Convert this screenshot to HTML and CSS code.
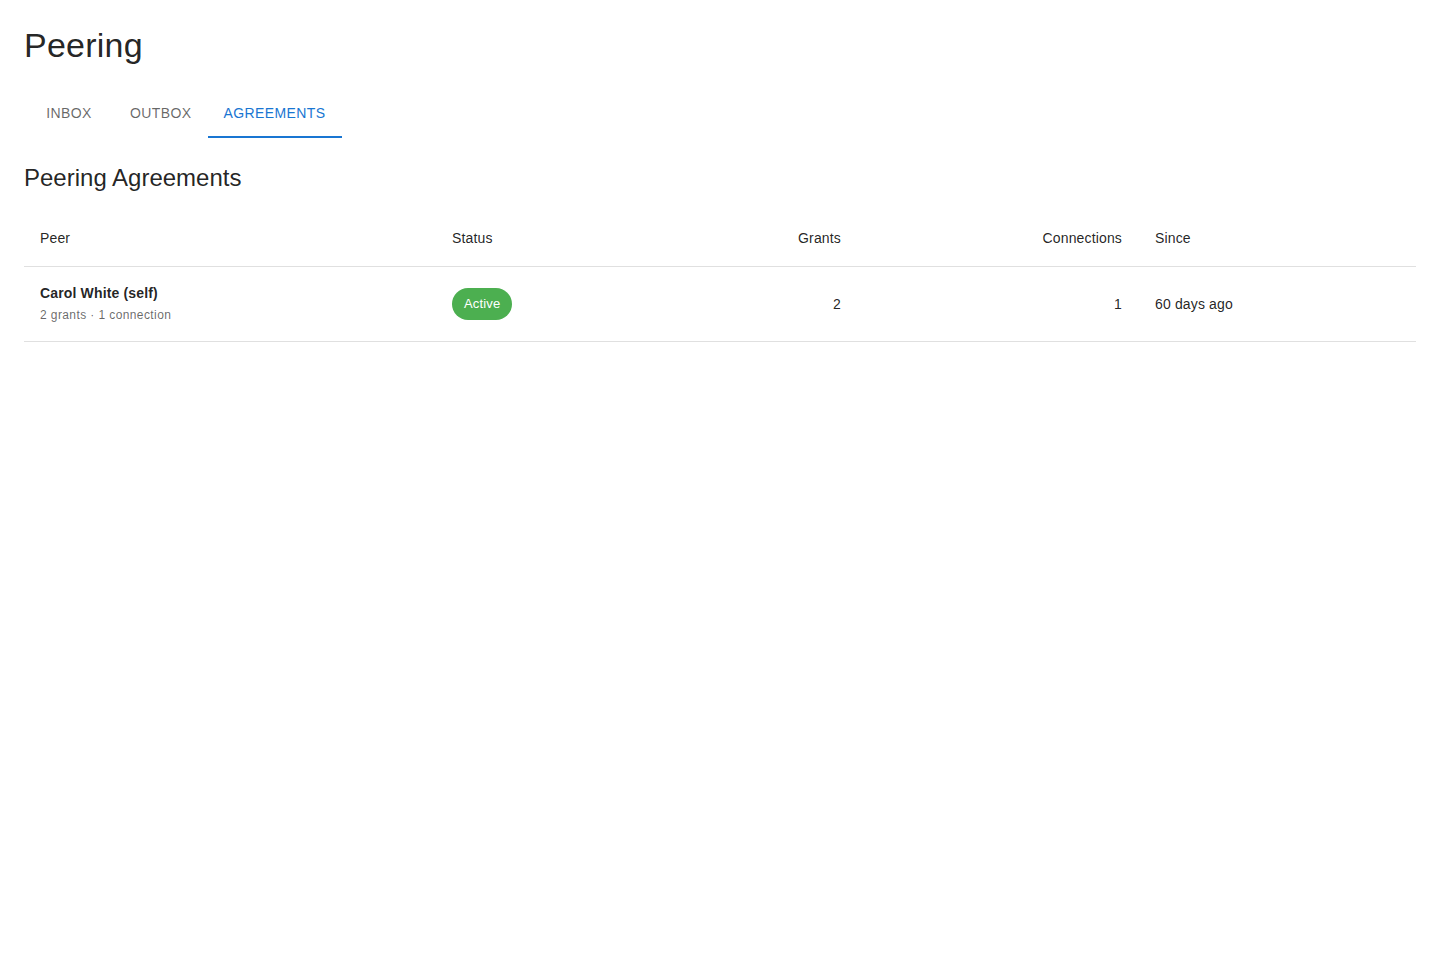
FILE: index.html
```html
<!DOCTYPE html>
<html>
  <head>
    <title>Peering</title>
    <link rel="stylesheet" href="styles.css">
  </head>
  <body>
    <main id="page">
      <h1 class="title">Peering</h1>

      <nav class="tabs">
        <button class="tab">Inbox</button>
        <button class="tab">Outbox</button>
        <button class="tab active">Agreements</button>
      </nav>

      <h2 class="subtitle">Peering Agreements</h2>

      <table class="agreements">
        <colgroup>
          <col class="col-peer">
          <col class="col-status">
          <col class="col-grants">
          <col class="col-conns">
          <col class="col-since">
        </colgroup>
        <thead>
          <tr>
            <th>Peer</th>
            <th>Status</th>
            <th class="num">Grants</th>
            <th class="num">Connections</th>
            <th>Since</th>
          </tr>
        </thead>
        <tbody>
          <tr>
            <td>
              <div class="peer-name">Carol White (self)</div>
              <div class="peer-meta">2 grants · 1 connection</div>
            </td>
            <td><span class="chip chip-active">Active</span></td>
            <td class="num">2</td>
            <td class="num">1</td>
            <td>60 days ago</td>
          </tr>
        </tbody>
      </table>
    </main>
  </body>
</html>
```

FILE: styles.css
```css
body
{
  margin: 0;
  font-family: "Liberation Sans", Arial, sans-serif;
  color: rgba(0, 0, 0, 0.87);
  background: #fff;
}

#page
{
  padding: 24px;
}

.title
{
  margin: 0 0 24px 0;
  font-size: 34px;
  font-weight: 400;
  line-height: 42px;
  letter-spacing: 0.25px;
}

.tabs
{
  display: flex;
  height: 48px;
}

.tab
{
  min-width: 90px;
  padding: 12px 16px;
  border: 0;
  border-bottom: 2px solid transparent;
  background: none;
  font-family: inherit;
  font-size: 14px;
  text-transform: uppercase;
  letter-spacing: 0.4px;
  color: rgba(0, 0, 0, 0.6);
  line-height: 22px;
  cursor: pointer;
}

.tab.active
{
  color: #1976d2;
  border-bottom-color: #1976d2;
}

.subtitle
{
  margin: 24px 0 16px 0;
  font-size: 24px;
  font-weight: 400;
  line-height: 32px;
}

.agreements
{
  width: 100%;
  border-collapse: collapse;
  table-layout: fixed;
  font-size: 14px;
  letter-spacing: 0.15px;
}

.col-peer   { width: 412px; }
.col-status { width: 200px; }
.col-grants { width: 222px; }
.col-conns  { width: 281px; }
.col-since  { width: 277px; }

.agreements th,
.agreements td
{
  padding: 16px;
  text-align: left;
  border-bottom: 1px solid #e0e0e0;
  line-height: 24px;
  vertical-align: middle;
}

.agreements th
{
  font-weight: 400;
}

.agreements td
{
  line-height: 20px;
}

.agreements .num
{
  text-align: right;
  padding-right: 17px;
}

.peer-name
{
  font-weight: 700;
  line-height: 20px;
}

.peer-meta
{
  margin-top: 2px;
  font-size: 12px;
  line-height: 20px;
  color: rgba(0, 0, 0, 0.6);
  letter-spacing: 0.4px;
}

.chip
{
  display: inline-flex;
  align-items: center;
  height: 32px;
  padding: 0 12px;
  border-radius: 16px;
  font-size: 13px;
}

.chip-active
{
  background: #4caf50;
  color: #fff;
}
```
